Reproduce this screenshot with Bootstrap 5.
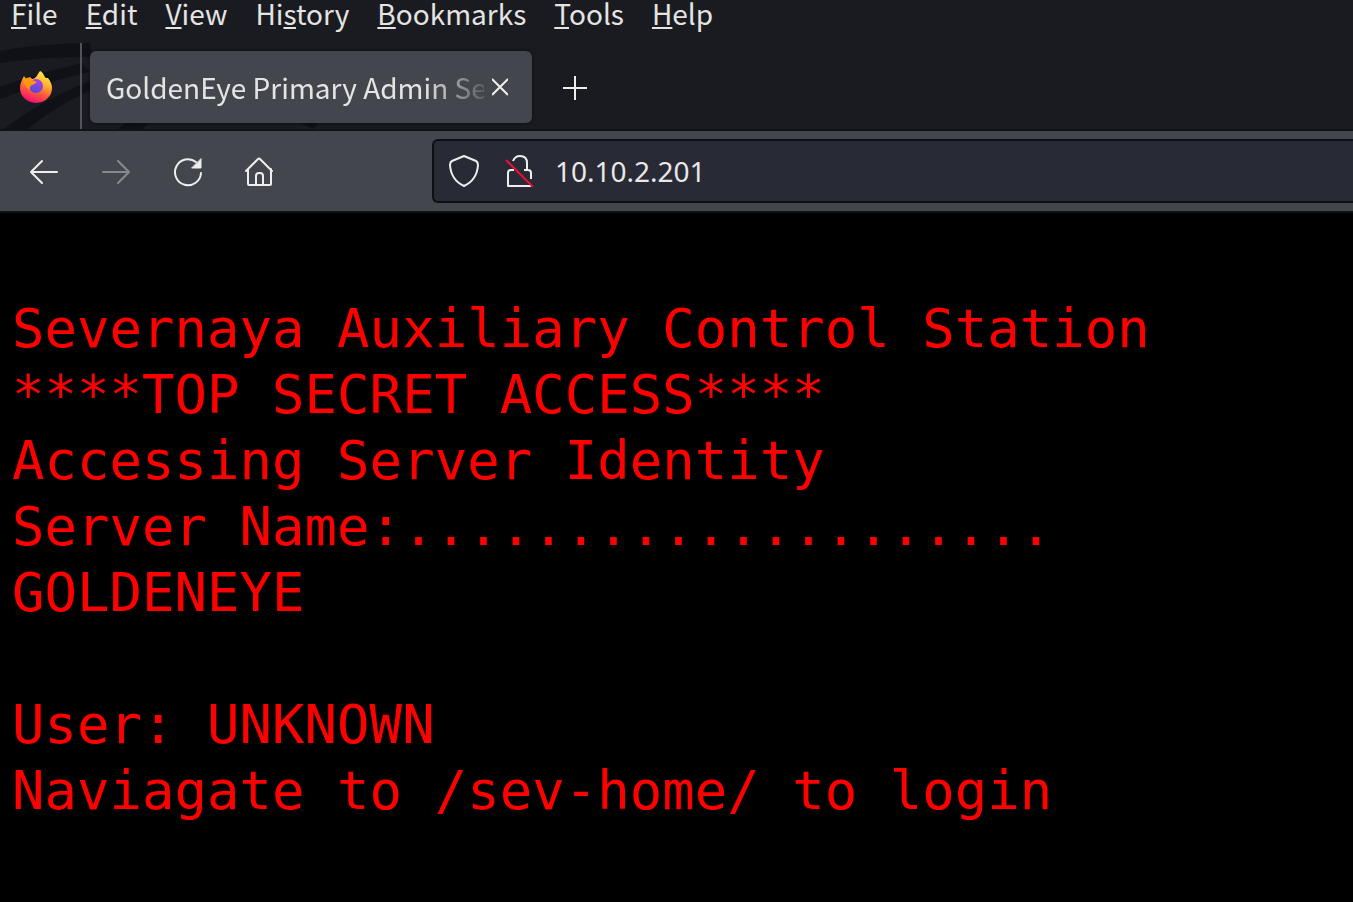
<!DOCTYPE html>
<html lang="en">
<head>
<meta charset="utf-8">
<meta name="viewport" content="width=device-width, initial-scale=1">
<title>GoldenEye Primary Admin Server</title>
<link rel="stylesheet" href="https://cdn.jsdelivr.net/npm/bootstrap@5.3.0/dist/css/bootstrap.min.css">
<style>
  body { background: #000; font-family: "Noto Sans CJK SC", "Noto Sans", sans-serif; font-weight: 400; color: #e4e4e2; }
  .menu-bar { background: #1a1b20; height: 43px; padding: 0 11px; gap: 28px; font-size: 28px; line-height: 26px; }
  .menu-bar a, .menu-bar a:hover { color: #e4e4e2; text-decoration: none; }
  .menu-bar u { text-decoration-thickness: 2px; text-underline-offset: 2px; text-decoration-skip-ink: none; }
  .tab-strip { background: #1a1b20; height: 88px; border-bottom: 2px solid #121317; }
  .strip-art { position: absolute; left: 0; top: 0; z-index: 0; }
  .tab-strip > button, .browser-tab { position: relative; }
  .plain { background: none; border: 0; padding: 0; color: #eeeeec; line-height: 0; }
  .pin-tab { width: 82px; height: 100%; border-right: 2px solid #53545a; padding: 2px 8px 0 0; }
  .new-tab { padding: 4px 7px 0; }
  .browser-tab { background: #44464d; border-radius: 6px; height: 72px; width: 442px; margin: 8px 0 0 8px; padding: 0 16px; box-shadow: 0 0 4px #0008; }
  .tab-title { font-size: 28px; width: 378px; overflow: hidden; white-space: nowrap; line-height: 72px;
    -webkit-mask-image: linear-gradient(90deg, #000 84%, transparent 103%); mask-image: linear-gradient(90deg, #000 84%, transparent 103%); }
  .tool-bar { background: #44464d; height: 82px; border-bottom: 2px solid #101116; padding-left: 28px; }
  .tool-bar .plain { width: 32px; padding-top: 2px; }
  .nav-group { gap: 40px; width: 404px; }
  .url-box { background: #282a36; border: 2px solid #0e0f13; border-right: 0; border-radius: 6px 0 0 6px; height: 64px; padding-left: 14px; }
  .url-box input { background: none; border: 0; outline: 0; color: #e8e8e6; font: 400 28px "Noto Sans", sans-serif; padding: 0; margin-left: 19px; }
  .terminal-text { color: #f00; font: 54px/66px "DejaVu Sans Mono", monospace; padding: 83px 12px 0; margin: 0; white-space: pre-wrap; overflow: visible; }
</style>
</head>
<body>
<header>
  <nav class="menu-bar d-flex align-items-start" aria-label="Menu bar">
    <a href="#"><u>F</u>ile</a>
    <a href="#"><u>E</u>dit</a>
    <a href="#"><u>V</u>iew</a>
    <a href="#">Hi<u>s</u>tory</a>
    <a href="#"><u>B</u>ookmarks</a>
    <a href="#"><u>T</u>ools</a>
    <a href="#"><u>H</u>elp</a>
  </nav>

  <div class="tab-strip d-flex position-relative">
    <svg class="strip-art" width="330" height="86" aria-hidden="true">
      <g fill="#101116">
        <path d="M0 8Q45 0 90 0L92 14Q45 13 0 20z"/>
        <path d="M0 44Q35 31 82 20L90 29Q45 39 0 56z"/>
        <path d="M4 86Q40 58 90 38V48Q55 63 28 86z"/>
        <path d="M118 86L128 78H152L142 86zM300 80H318L314 86z"/>
      </g>
    </svg>
    <button class="plain pin-tab" type="button" aria-label="Firefox View">
      <svg width="32" height="34" viewBox="0 0 32 34">
        <defs>
          <linearGradient id="flame" x1="0.75" y1="0" x2="0.35" y2="1">
            <stop offset="0" stop-color="#fff44f"/><stop offset=".35" stop-color="#ffb52e"/><stop offset=".65" stop-color="#ff5a3c"/><stop offset="1" stop-color="#f20a73"/>
          </linearGradient>
          <linearGradient id="globe" x1=".7" y1="0" x2=".3" y2="1">
            <stop offset="0" stop-color="#b13bea"/><stop offset="1" stop-color="#4a4fd0"/>
          </linearGradient>
        </defs>
        <path fill="url(#flame)" d="M20 1C24 3 24 7 26 8L28 8C31 12 32 15 32 18A16 15 0 0 1 0 18C0 13 2 10 4 6L6 9L10 7L12 9C16 9 17 5 20 1z"/>
        <circle cx="16" cy="16" r="7" fill="url(#globe)"/>
        <path fill="#ff980e" d="M4 9Q9 6 12 10L17 12Q14 15 12 15Q9 17 10 20Q4 17 4 9z"/>
      </svg>
    </button>
    <div class="browser-tab d-flex align-items-center">
      <div class="tab-title">GoldenEye Primary Admin Server</div>
      <button class="plain ms-2" type="button" aria-label="Close tab">
        <svg width="16" height="18" viewBox="0 0 16 18" fill="none" stroke="currentColor" stroke-width="2"><path d="M0 1L16 17M16 1L0 17"/></svg>
      </button>
    </div>
    <button class="plain new-tab ms-4" type="button" aria-label="New tab">
      <svg width="24" height="24" viewBox="0 0 24 24" fill="none" stroke="currentColor" stroke-width="2"><path d="M12 0V24M0 12H24"/></svg>
    </button>
  </div>

  <div class="tool-bar d-flex align-items-center">
    <div class="nav-group d-flex flex-shrink-0">
      <button class="plain" type="button" aria-label="Back">
        <svg width="32" height="32" viewBox="0 0 32 32" fill="none" stroke="currentColor" stroke-width="2" stroke-linecap="round" stroke-linejoin="round"><path d="M29 16H3M14 5L3 16L14 27"/></svg>
      </button>
      <button class="plain opacity-50" type="button" aria-label="Forward" disabled>
        <svg width="32" height="32" viewBox="0 0 32 32" fill="none" stroke="#ccc" stroke-width="2" stroke-linecap="round" stroke-linejoin="round"><path d="M3 16H29M18 5L29 16L18 27"/></svg>
      </button>
      <button class="plain" type="button" aria-label="Reload">
        <svg width="32" height="32" viewBox="0 0 32 32" fill="none" stroke="currentColor" stroke-width="2" stroke-linecap="round" stroke-linejoin="round"><path d="M29 17A13 13 0 1 1 24 6"/><path d="M29 3V12H20z" fill="currentColor" stroke-width="1"/></svg>
      </button>
      <button class="plain" type="button" aria-label="Home">
        <svg width="32" height="32" viewBox="0 0 32 32" fill="none" stroke="currentColor" stroke-width="2" stroke-linecap="round" stroke-linejoin="round"><path d="M2 15L14 3Q15 2 16 3L28 15M4 13V28Q4 29 5 29H26Q27 29 27 28V13M12 29V20Q12 17 15 17H16Q19 17 19 20V29"/></svg>
      </button>
    </div>
    <form class="url-box d-flex align-items-center flex-grow-1">
      <svg width="32" height="32" viewBox="0 0 32 32" fill="none" stroke="#eeeeec" stroke-width="2" stroke-linejoin="round" aria-hidden="true"><path d="M16 1L28 6Q30 7 30 10Q29 25 16 31Q3 25 2 10Q2 7 4 6z"/></svg>
      <svg class="ms-4" width="32" height="32" viewBox="0 0 32 32" fill="none" stroke="#eeeeec" stroke-width="2" stroke-linejoin="round" aria-hidden="true"><path d="M9 6Q11 1 16 1Q23 1 23 8V15M10 15H7Q4 15 4 18V31H27M20 15H24Q27 15 27 18V24"/><path d="M2 5L29 32" stroke="#e9113c"/></svg>
      <input class="flex-grow-1" type="text" value="10.10.2.201" aria-label="Address">
    </form>
  </div>
</header>

<main>
<pre class="terminal-text">Severnaya Auxiliary Control Station
****TOP SECRET ACCESS****
Accessing Server Identity
Server Name:....................
GOLDENEYE

User: UNKNOWN
Naviagate to /sev-home/ to login</pre>
</main>
<script src="https://cdn.jsdelivr.net/npm/bootstrap@5.3.0/dist/js/bootstrap.bundle.min.js"></script>
</body>
</html>
